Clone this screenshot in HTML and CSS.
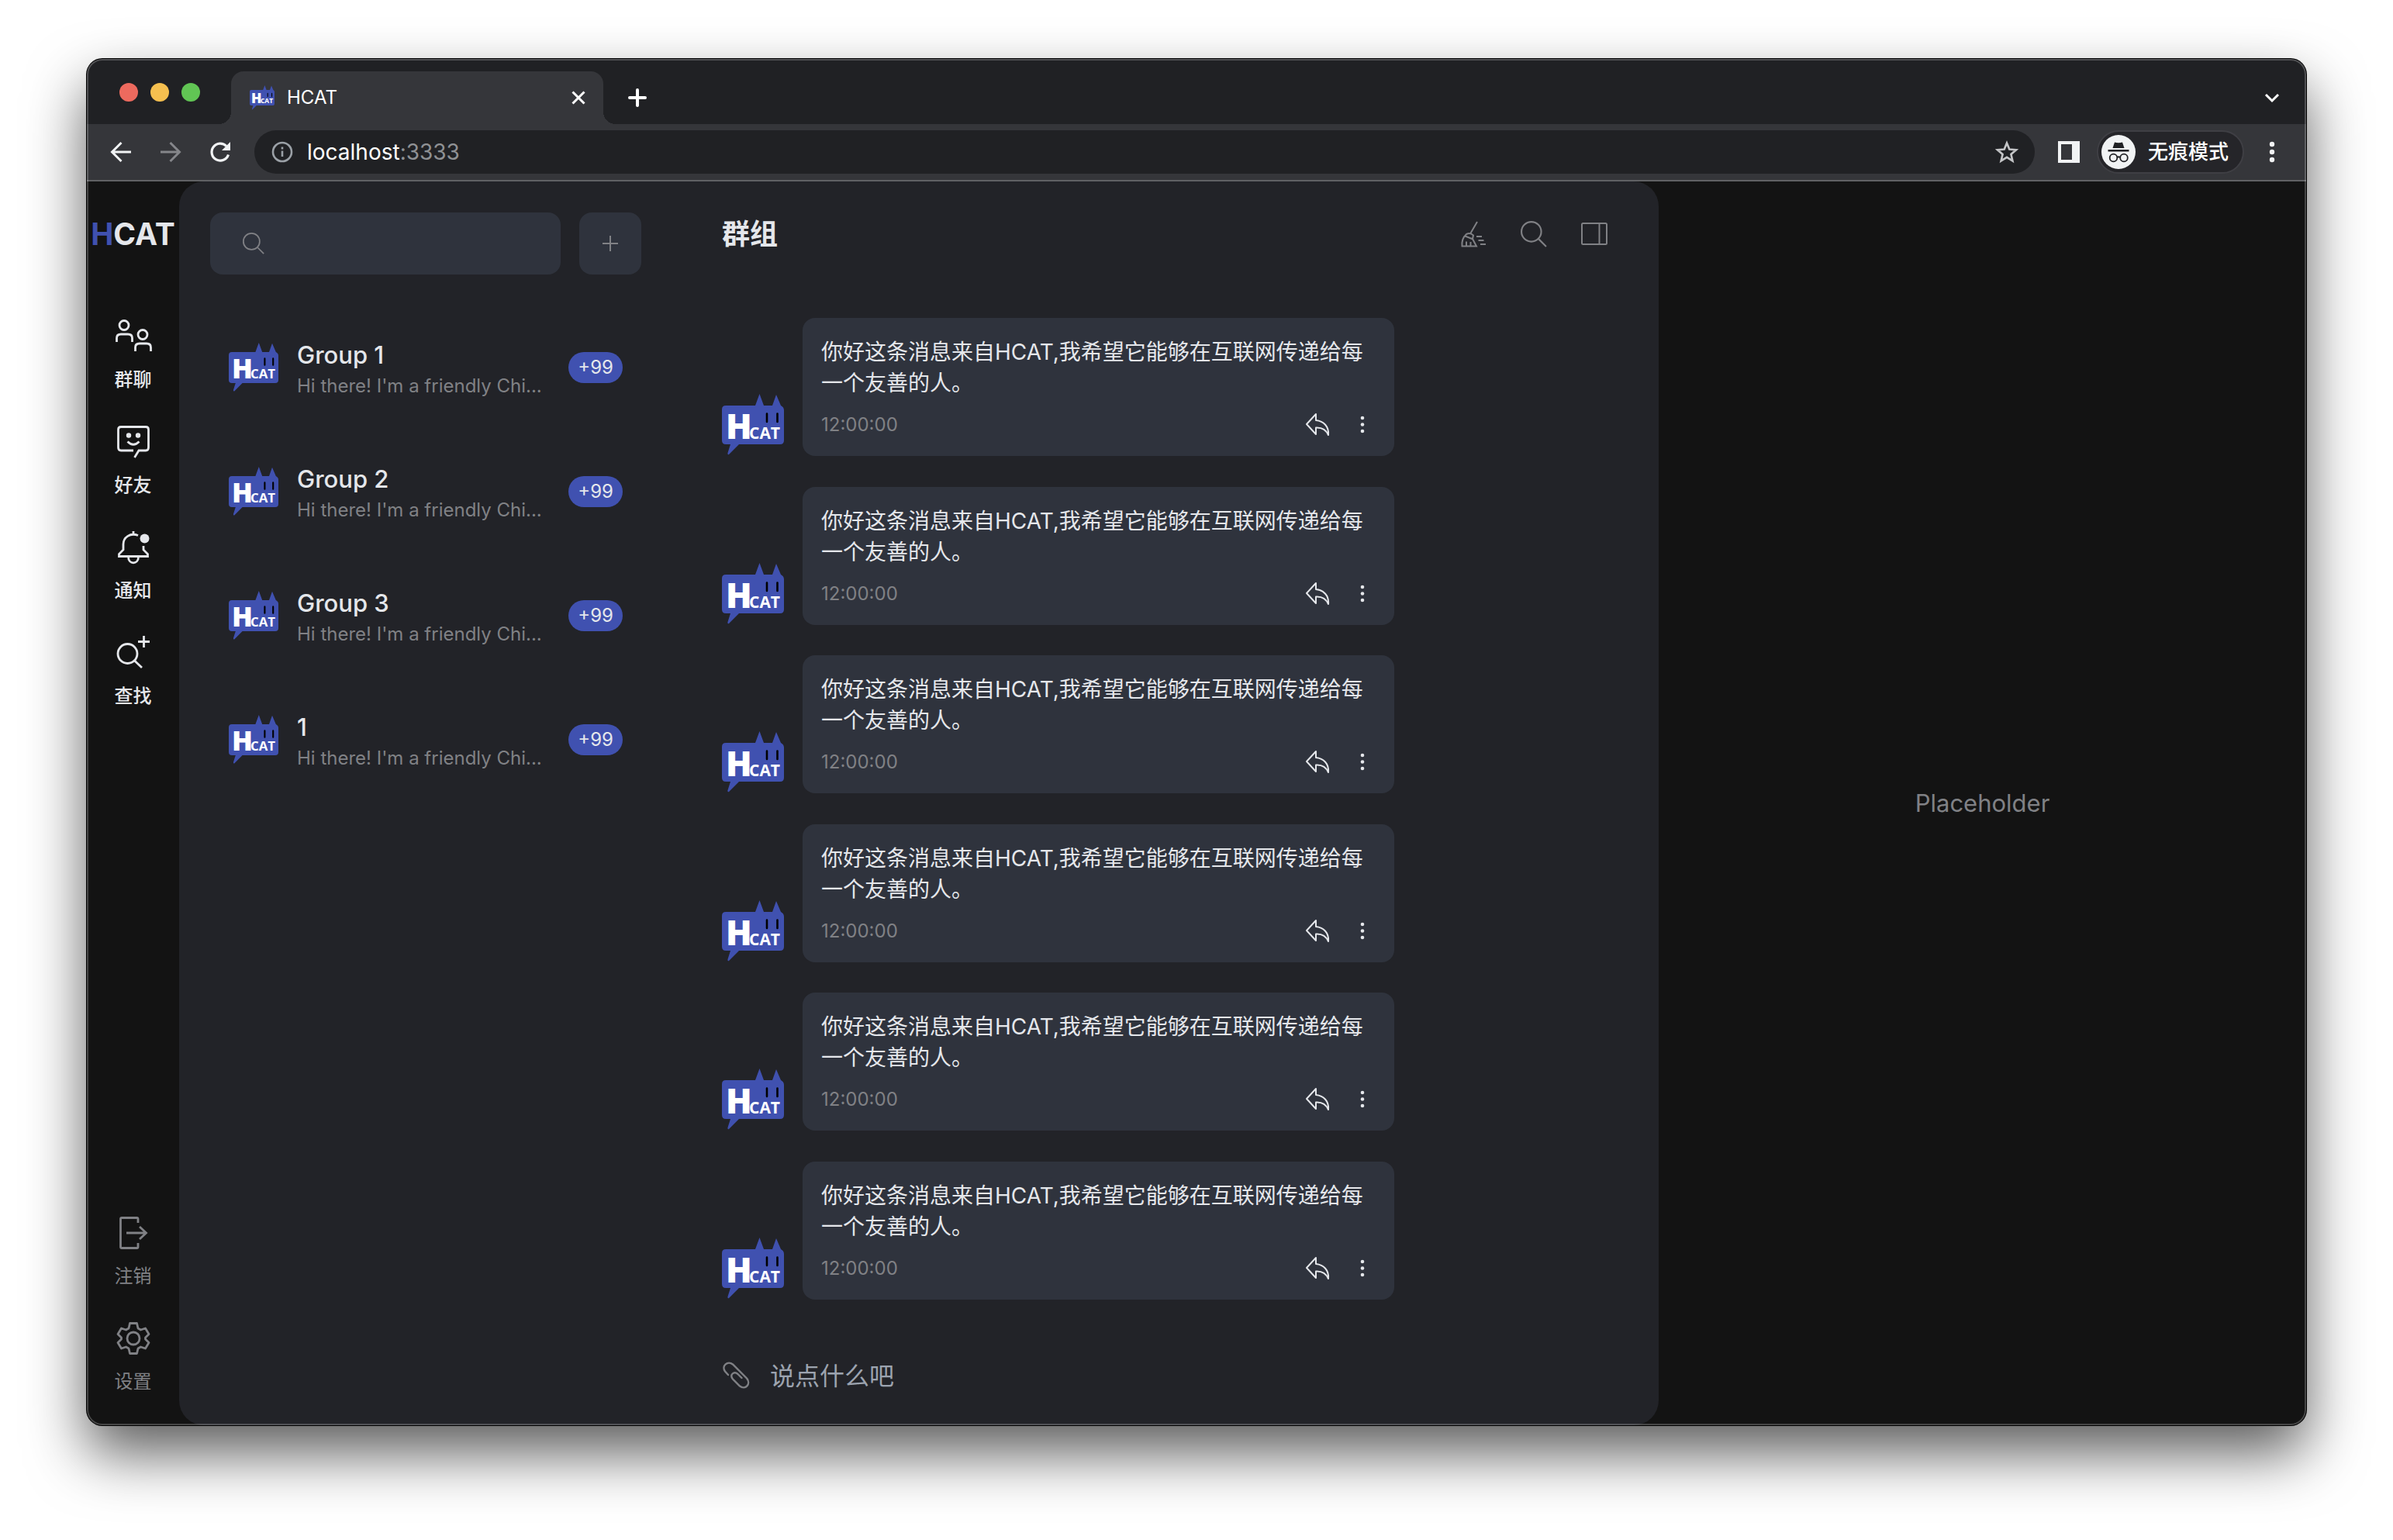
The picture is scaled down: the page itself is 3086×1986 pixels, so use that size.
FILE: index.html
```html
<!DOCTYPE html>
<html lang="zh-CN">
<head>
<meta charset="utf-8">
<meta name="viewport" content="width=device-width, initial-scale=1">
<title>HCAT</title>
<link rel="stylesheet" href="styles.css">
</head>
<body>
<svg class="sprite" aria-hidden="true">
  <symbol id="logo" viewBox="0 0 80 80">
    <path fill="#4051b0" d="M5 15H43L48.500 0L54 15H65L70 1L76 15Q80 17 80 21V60Q80 65 75 65H22L9 78Q7 79 7.500 76L11 65H5Q0 65 0 60V20Q0 15 5 15Z"/>
    <path stroke="#000" stroke-width="2.600" stroke-linecap="round" d="M58 25.500V36M71.500 25.500V36"/>
    <text class="logo-h" x="5" y="58">H</text>
    <text class="logo-cat" x="35" y="58">CAT</text>
  </symbol>
  <symbol id="i-search" viewBox="0 0 32 32"><g fill="none" stroke="currentColor" stroke-width="2"><circle cx="13" cy="13" r="12"/><path d="M22 22L31 31"/></g></symbol>
  <symbol id="i-reply" viewBox="0 0 32 32"><path fill="none" stroke="currentColor" stroke-width="2" stroke-linejoin="round" d="M14 2L2 15L14 28V19.500C22 19 27 22 30 29C31 18 24 11 14 10Z"/></symbol>
  <symbol id="i-more" viewBox="0 0 32 32"><g fill="currentColor"><circle cx="16" cy="7" r="2.300"/><circle cx="16" cy="15.500" r="2.300"/><circle cx="16" cy="24" r="2.300"/></g></symbol>
</svg>

<div class="window">
  <header class="tabstrip">
    <div class="lights"><span class="light red"></span><span class="light yellow"></span><span class="light green"></span></div>
    <div class="tab">
      <svg class="favicon"><use href="#logo"/></svg>
      <span class="tab-title">HCAT</span>
      <button class="bare" aria-label="Close tab"><svg class="s24" viewBox="0 0 24 24"><path fill="none" stroke="#fff" stroke-width="3" d="M4.500 4.500L19.500 19.500M19.500 4.500L4.500 19.500"/></svg></button>
    </div>
    <button class="bare strip-button new-tab" aria-label="New tab"><svg class="s32" viewBox="0 0 32 32"><path stroke="#fff" stroke-width="4" stroke-linecap="round" d="M16 6V26M6 16H26"/></svg></button>
    <button class="bare strip-button tab-search" aria-label="Search tabs"><svg class="s32" viewBox="0 0 32 32"><path fill="none" stroke="#fff" stroke-width="3" d="M8 12L16 20L24 12"/></svg></button>
  </header>

  <div class="toolbar">
    <div class="nav-buttons">
      <button class="bare" aria-label="Back"><svg class="s32" viewBox="0 0 32 32"><path fill="none" stroke="#f1f3f4" stroke-width="3" d="M29 16H5M16.500 4L4.500 16L16.500 28"/></svg></button>
      <button class="bare" aria-label="Forward" disabled><svg class="s32" viewBox="0 0 32 32"><path fill="none" stroke="#85868a" stroke-width="3" d="M3 16H27M15.500 4L27.500 16L15.500 28"/></svg></button>
      <button class="bare" aria-label="Reload"><svg class="s32" viewBox="0 0 32 32"><path fill="none" stroke="#f1f3f4" stroke-width="3.200" d="M26.500 19.500A11 11 0 1 1 24 8.500"/><path fill="#f1f3f4" d="M29 3V14H18Z"/></svg></button>
    </div>
    <div class="omnibox">
      <svg class="s32" viewBox="0 0 32 32"><g fill="none" stroke="#9aa0a6" stroke-width="2.600"><circle cx="16" cy="16" r="12"/><path d="M16 14.500V22M16 9.500V12.500"/></g></svg>
      <div class="url">localhost<span class="port">:3333</span></div>
      <button class="bare" aria-label="Bookmark"><svg class="s32" viewBox="0 0 32 32"><path fill="none" stroke="#c4c5c7" stroke-width="2.600" d="M16 4.500L19.300 12.500L28 13.200L21.400 18.900L23.400 27.400L16 22.800L8.600 27.400L10.600 18.900L4 13.200L12.700 12.500Z"/></svg></button>
    </div>
    <div class="toolbar-end">
      <button class="bare" aria-label="Side panel"><svg class="s32" viewBox="0 0 32 32"><path fill="#f1f3f4" fill-rule="evenodd" d="M2 2H30V30H2ZM6 6V26H20V6Z"/></svg></button>
      <button class="incognito">
        <svg class="s44" viewBox="0 0 44 44"><circle cx="22" cy="22" r="22" fill="#f1f3f4"/><path fill="#202124" d="M14.500 17L17 9.500Q22 11 27 9.500L29.500 17ZM8.500 19H35.500V21.500H8.500Z"/><g fill="none" stroke="#202124" stroke-width="1.800"><circle cx="15.500" cy="29.500" r="4.800"/><circle cx="29" cy="29.500" r="4.800"/><path d="M20.300 29Q22 27.500 24 29"/></g></svg>
        <span>无痕模式</span>
      </button>
      <button class="bare" aria-label="Menu"><svg class="s32" viewBox="0 0 32 32"><g fill="#f1f3f4"><circle cx="16" cy="6" r="3.200"/><circle cx="16" cy="16" r="3.200"/><circle cx="16" cy="26" r="3.200"/></g></svg></button>
    </div>
  </div>

  <div class="app">
    <nav class="sidebar">
      <div class="brand"><span class="brand-h">H</span>CAT</div>
      <div class="side-group">
        <a class="side-item" href="#groups"><svg class="s48" viewBox="0 0 48 48"><g fill="none" stroke="currentColor" stroke-width="2.800"><circle cx="12" cy="9.500" r="6"/><path d="M2.500 31V26Q2.500 21 8 21H17Q22.500 21 22.500 26V31"/><circle cx="36" cy="21.500" r="6"/><path d="M26.500 43V38Q26.500 33 32 33H41Q46.500 33 46.500 38V43"/></g></svg><span>群聊</span></a>
        <a class="side-item" href="#friends"><svg class="s48" viewBox="0 0 48 48"><g fill="none" stroke="currentColor" stroke-width="2.800"><path d="M24 35H8Q4.500 35 4.500 31V8Q4.500 4.500 8 4.500H40Q43.500 4.500 43.500 8V31Q43.500 35 40 35H31L25.500 44"/><path d="M16.500 23.500Q24 31 31.500 23.500"/></g><circle cx="18" cy="15.500" r="3.200" fill="currentColor"/><circle cx="30" cy="15.500" r="3.200" fill="currentColor"/></svg><span>好友</span></a>
        <a class="side-item" href="#notices"><svg class="s48" viewBox="0 0 48 48"><g fill="none" stroke="currentColor" stroke-width="2.800"><path d="M30 8.500C20 4.500 11 11 11 20V27L5.500 32.500V35.500H42.500V32.500L37 27V22M24 7V3M17.500 36C17.500 46.500 30.500 46.500 30.500 36"/></g><circle cx="38.500" cy="12.500" r="6" fill="currentColor"/></svg><span>通知</span></a>
        <a class="side-item" href="#find"><svg class="s48" viewBox="0 0 48 48"><g fill="none" stroke="currentColor" stroke-width="2.800"><circle cx="16.500" cy="25" r="12.500"/><path d="M25.500 34L35 43M37.500 2V17M30 9.500H45"/></g></svg><span>查找</span></a>
      </div>
      <div class="side-group side-bottom">
        <a class="side-item muted" href="#logout"><svg class="s48" viewBox="0 0 48 48"><g fill="none" stroke="currentColor" stroke-width="2.800"><path d="M30 11V6Q30 4.500 28.500 4.500H9Q7.500 4.500 7.500 6V42Q7.500 43.500 9 43.500H28.500Q30 43.500 30 42V37M15 24H40M32 16L40.500 24L32 32"/></g></svg><span>注销</span></a>
        <a class="side-item muted" href="#settings"><svg class="s48" viewBox="0 0 48 48"><g fill="none" stroke="currentColor" stroke-width="2.800" stroke-linejoin="round"><circle cx="24" cy="24" r="8"/><path d="M19.500 4.500H28.500L30 11L33.500 13L39.500 11L44 18.500L39.500 23V25L44 29.500L39.500 37L33.500 35L30 37L28.500 43.500H19.500L18 37L14.500 35L8.500 37L4 29.500L8.500 25V23L4 18.500L8.500 11L14.500 13L18 11Z"/></g></svg><span>设置</span></a>
      </div>
    </nav>

    <main class="main">
      <section class="list-panel">
        <div class="search-row">
          <label class="search"><svg class="s28"><use href="#i-search"/></svg><input class="search-input" type="search" aria-label="搜索"></label>
          <button class="add" aria-label="添加"><svg class="s20" viewBox="0 0 20 20"><path stroke="currentColor" stroke-width="2" d="M10 0V20M0 10H20"/></svg></button>
        </div>
        <ul class="groups">
          <li class="group"><svg class="s64"><use href="#logo"/></svg><div class="group-text"><div class="group-name">Group 1</div><div class="group-desc">Hi there! I'm a friendly Chi...</div></div><span class="badge">+99</span></li>
          <li class="group"><svg class="s64"><use href="#logo"/></svg><div class="group-text"><div class="group-name">Group 2</div><div class="group-desc">Hi there! I'm a friendly Chi...</div></div><span class="badge">+99</span></li>
          <li class="group"><svg class="s64"><use href="#logo"/></svg><div class="group-text"><div class="group-name">Group 3</div><div class="group-desc">Hi there! I'm a friendly Chi...</div></div><span class="badge">+99</span></li>
          <li class="group"><svg class="s64"><use href="#logo"/></svg><div class="group-text"><div class="group-name">1</div><div class="group-desc">Hi there! I'm a friendly Chi...</div></div><span class="badge">+99</span></li>
        </ul>
      </section>

      <section class="chat">
        <div class="chat-header">
          <h1 class="chat-title">群组</h1>
          <div class="chat-tools">
            <button class="bare muted" aria-label="清空"><svg class="s36" viewBox="0 0 36 36"><g fill="none" stroke="currentColor" stroke-width="2"><path d="M24 2L15 17.500M10 18Q15 15.500 19 19.500L18 24L23 33.500H4.500Q3.500 24 10 18ZM8.500 20.500L18.500 24.500M10 33V27.500M15.500 33V28M23 21H30M25.500 26H32.500M28 31H35"/></g></svg></button>
            <button class="bare muted" aria-label="搜索"><svg class="s34"><use href="#i-search"/></svg></button>
            <button class="bare muted" aria-label="侧栏"><svg class="s36" viewBox="0 0 36 36"><g fill="none" stroke="currentColor" stroke-width="2"><rect x="1" y="4" width="32" height="27" rx="1.500"/><path d="M23.500 4V31"/></g></svg></button>
          </div>
        </div>

        <div class="messages">
          <article class="message"><svg class="s80"><use href="#logo"/></svg><div class="bubble"><p class="message-text">你好这条消息来自HCAT,我希望它能够在互联网传递给每一个友善的人。</p><div class="message-foot"><time class="time">12:00:00</time><button class="bare" aria-label="回复"><svg class="s32"><use href="#i-reply"/></svg></button><button class="bare" aria-label="更多"><svg class="s32"><use href="#i-more"/></svg></button></div></div></article>
          <article class="message"><svg class="s80"><use href="#logo"/></svg><div class="bubble"><p class="message-text">你好这条消息来自HCAT,我希望它能够在互联网传递给每一个友善的人。</p><div class="message-foot"><time class="time">12:00:00</time><button class="bare" aria-label="回复"><svg class="s32"><use href="#i-reply"/></svg></button><button class="bare" aria-label="更多"><svg class="s32"><use href="#i-more"/></svg></button></div></div></article>
          <article class="message"><svg class="s80"><use href="#logo"/></svg><div class="bubble"><p class="message-text">你好这条消息来自HCAT,我希望它能够在互联网传递给每一个友善的人。</p><div class="message-foot"><time class="time">12:00:00</time><button class="bare" aria-label="回复"><svg class="s32"><use href="#i-reply"/></svg></button><button class="bare" aria-label="更多"><svg class="s32"><use href="#i-more"/></svg></button></div></div></article>
          <article class="message"><svg class="s80"><use href="#logo"/></svg><div class="bubble"><p class="message-text">你好这条消息来自HCAT,我希望它能够在互联网传递给每一个友善的人。</p><div class="message-foot"><time class="time">12:00:00</time><button class="bare" aria-label="回复"><svg class="s32"><use href="#i-reply"/></svg></button><button class="bare" aria-label="更多"><svg class="s32"><use href="#i-more"/></svg></button></div></div></article>
          <article class="message"><svg class="s80"><use href="#logo"/></svg><div class="bubble"><p class="message-text">你好这条消息来自HCAT,我希望它能够在互联网传递给每一个友善的人。</p><div class="message-foot"><time class="time">12:00:00</time><button class="bare" aria-label="回复"><svg class="s32"><use href="#i-reply"/></svg></button><button class="bare" aria-label="更多"><svg class="s32"><use href="#i-more"/></svg></button></div></div></article>
          <article class="message"><svg class="s80"><use href="#logo"/></svg><div class="bubble"><p class="message-text">你好这条消息来自HCAT,我希望它能够在互联网传递给每一个友善的人。</p><div class="message-foot"><time class="time">12:00:00</time><button class="bare" aria-label="回复"><svg class="s32"><use href="#i-reply"/></svg></button><button class="bare" aria-label="更多"><svg class="s32"><use href="#i-more"/></svg></button></div></div></article>
        </div>

        <div class="composer">
          <button class="bare muted" aria-label="附件"><svg class="s36" viewBox="0 0 36 36"><path fill="none" stroke="currentColor" stroke-width="2.400" stroke-linecap="round" d="M8 17L4 12.500C-1 5.500 7.500 -2 14 3.500L32 21.500C38 29 30 37 23 31.500L14 22.500C9.500 17 15.500 11.500 20.500 16L25.500 21"/></svg></button>
          <input class="composer-input" type="text" placeholder="说点什么吧" aria-label="消息">
        </div>
      </section>
    </main>

    <aside class="aside">Placeholder</aside>
  </div>
</div>
</body>
</html>
```

FILE: styles.css
```css
* { box-sizing: border-box; }

body {
  display: flex;
  min-height: 100vh;
  margin: 0;
  padding: 76px 112px 148px;
  background: #fff;
  color: #e5e7eb;
  font-family: Inter, "Noto Sans CJK SC", sans-serif;
  font-size: 24px;
  line-height: 32px;
}

svg { display: block; flex: none; }
button, input { font: inherit; color: inherit; }
.sprite { display: none; }
.s20 { width: 20px; height: 20px; }
.s24 { width: 24px; height: 24px; }
.s28 { width: 28px; height: 28px; }
.s32 { width: 32px; height: 32px; }
.s34 { width: 34px; height: 34px; }
.s36 { width: 36px; height: 36px; }
.s44 { width: 44px; height: 44px; }
.s48 { width: 48px; height: 48px; }
.s64 { width: 64px; height: 64px; }
.s80 { width: 80px; height: 80px; }
.logo-h, .logo-cat { fill: #fff; font-family: "Open Sans", sans-serif; font-weight: 800; }
.logo-h { font-size: 44px; }
.logo-cat { font-size: 21px; font-weight: 700; }
.bare { padding: 0; border: 0; background: none; cursor: pointer; }
.muted { color: #808185; }

/* Browser window */
.window {
  position: relative;
  display: flex;
  flex: 1;
  flex-direction: column;
  min-width: 0;
  border-radius: 20px;
  background: #131313;
  box-shadow: 0 0 0 1px #000, 0 36px 76px rgba(0, 0, 0, 0.64);
  overflow: hidden;
}
.window::after {
  content: "";
  position: absolute;
  inset: 0;
  border: 2px solid rgba(255, 255, 255, 0.22);
  border-radius: 20px;
  pointer-events: none;
}
.tabstrip {
  display: flex;
  align-items: flex-end;
  height: 84px;
  padding: 0 28px 0 42px;
  background: #202124;
}
.lights { display: flex; align-self: center; gap: 16px; margin: 2px 40px 0 0; }
.light { width: 24px; height: 24px; border-radius: 50%; }
.red { background: #ed6a5e; }
.yellow { background: #f5bf4f; }
.green { background: #61c554; }
.tab {
  position: relative;
  display: flex;
  align-items: center;
  width: 480px;
  height: 68px;
  padding: 0 20px 0 24px;
  border-radius: 16px 16px 0 0;
  background: #35363a;
  color: #fff;
}
.tab::before, .tab::after {
  content: "";
  position: absolute;
  bottom: 0;
  width: 16px;
  height: 16px;
}
.tab::before { right: 100%; background: radial-gradient(circle at 0 0, #202124 16px, #35363a 16px); }
.tab::after { left: 100%; background: radial-gradient(circle at 100% 0, #202124 16px, #35363a 16px); }
.favicon { width: 32px; height: 32px; }
.tab-title { flex: 1; margin-left: 16px; }
.strip-button { display: flex; align-items: center; height: 68px; }
.new-tab { margin-left: 28px; }
.tab-search { margin-left: auto; }

.toolbar {
  display: flex;
  align-items: center;
  gap: 28px;
  height: 74px;
  padding: 0 28px;
  border-bottom: 2px solid #606164;
  background: #35363a;
}
.nav-buttons { display: flex; gap: 32px; }
.omnibox {
  display: flex;
  flex: 1;
  align-items: center;
  height: 56px;
  padding: 0 20px;
  border-radius: 28px;
  background: #202124;
}
.url { flex: 1; margin-left: 16px; color: #fff; font-size: 28px; }
.port { color: #8f9194; }
.toolbar-end { display: flex; align-items: center; gap: 20px; }
.incognito {
  display: flex;
  align-items: center;
  gap: 16px;
  height: 56px;
  padding: 0 18px 0 4px;
  border: 2px solid #3f3f44;
  border-radius: 28px;
  background: #252529;
  color: #fff;
  font-size: 26px;
  font-weight: 500;
}

/* Application */
.app { display: flex; flex: 1; }
.sidebar {
  display: flex;
  flex: none;
  flex-direction: column;
  align-items: center;
  width: 119px;
  padding: 44px 0 40px;
}
.brand { font-size: 39px; font-weight: 700; line-height: 48px; }
.brand-h { color: #4051b0; }
.side-group { display: flex; flex-direction: column; gap: 40px; margin-top: 84px; }
.side-bottom { margin-top: auto; }
.side-item {
  display: flex;
  flex-direction: column;
  align-items: center;
  gap: 16px;
  color: #e5e7eb;
  font-weight: 500;
  text-decoration: none;
}
.side-item.muted { color: #808185; font-weight: 400; }

.main {
  display: flex;
  flex: 0 0 calc(100% * 2 / 3);
  border-radius: 32px;
  background: #222328;
}
.list-panel { flex: 1; min-width: 0; padding: 40px; }
.search-row { display: flex; gap: 24px; }
.search, .add {
  display: flex;
  align-items: center;
  height: 80px;
  border: 0;
  border-radius: 16px;
  background: #2f333d;
  color: #808185;
}
.search { flex: 1; min-width: 0; padding: 0 42px; }
.search-input {
  flex: 1;
  min-width: 0;
  margin-left: 16px;
  padding: 0;
  border: 0;
  outline: 0;
  background: none;
}
.add { justify-content: center; width: 80px; padding: 0; }
.groups {
  display: flex;
  flex-direction: column;
  gap: 32px;
  margin: 56px 0 0;
  padding: 0;
  list-style: none;
}
.group { display: flex; align-items: center; padding: 24px; }
.group-text { flex: 1; min-width: 0; margin: 0 20px 0 24px; }
.group-name { font-size: 31px; font-weight: 500; line-height: 48px; }
.group-desc { color: #808185; white-space: nowrap; }
.badge { padding: 4px 12px; border-radius: 20px; background: #4051b0; }

.chat {
  display: flex;
  flex: 0 0 calc(100% * 2 / 3);
  flex-direction: column;
  padding: 44px 64px 40px;
}
.chat-header { display: flex; align-items: center; justify-content: space-between; height: 48px; }
.chat-title { margin: 0; font-size: 36px; font-weight: 700; line-height: 48px; }
.chat-tools { display: flex; align-items: center; gap: 44px; }
.messages {
  display: flex;
  flex: 1;
  flex-direction: column;
  justify-content: space-between;
  margin: 84px 0 74px;
}
.message { display: flex; align-items: flex-end; gap: 24px; }
.bubble {
  flex: 0 0 calc(100% * 2 / 3);
  padding: 24px;
  border-radius: 16px;
  background: #2f333d;
}
.message-text { margin: 0; font-size: 28px; line-height: 40px; }
.message-foot { display: flex; align-items: center; gap: 26px; margin-top: 18px; padding-right: 1px; }
.time { flex: 1; color: #808185; }
.composer { display: flex; align-items: center; gap: 26px; }
.composer-input {
  flex: 1;
  min-width: 0;
  height: 48px;
  padding: 0;
  border: 0;
  outline: 0;
  background: none;
  font-size: 32px;
}
.composer-input::placeholder { color: #9ca3af; opacity: 1; }

.aside {
  display: flex;
  flex: 1;
  align-items: center;
  justify-content: center;
  color: #808185;
  font-size: 31px;
}
```
